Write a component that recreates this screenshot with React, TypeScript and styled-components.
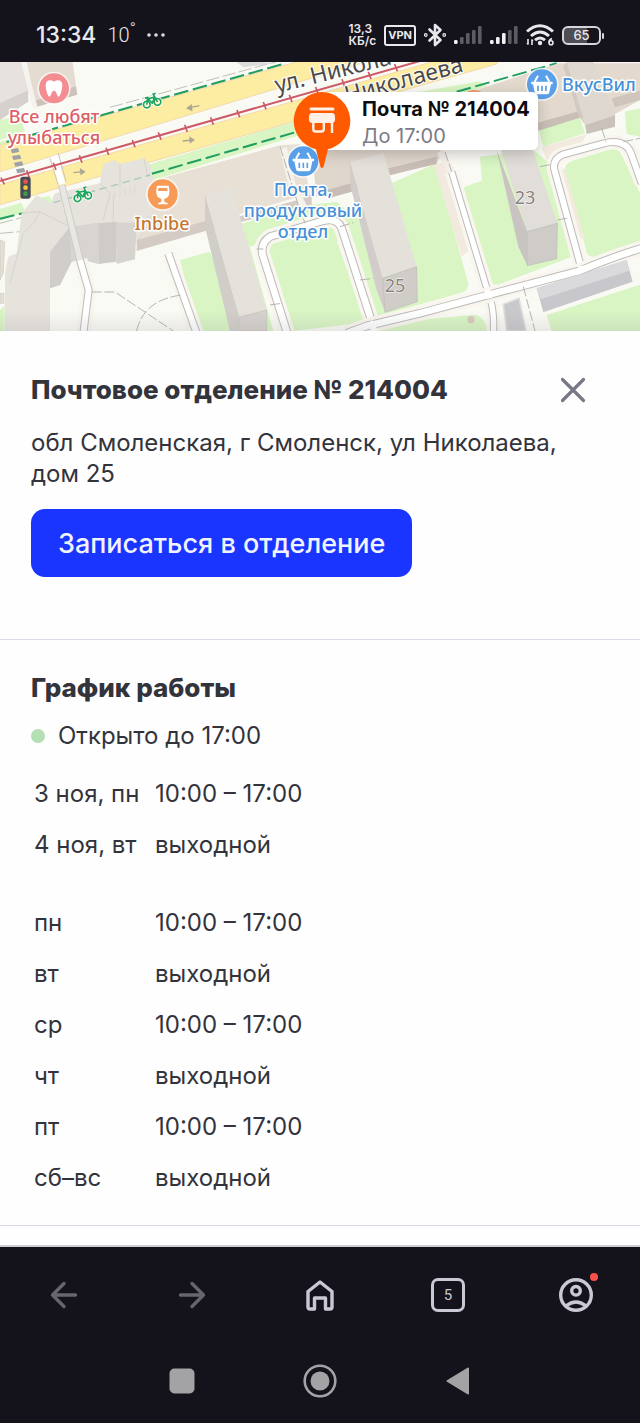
import styled, { createGlobalStyle } from 'styled-components';

const DATES = [
  { day: '3 ноя, пн', hours: '10:00 – 17:00' },
  { day: '4 ноя, вт', hours: 'выходной' },
];

const WEEK = [
  { day: 'пн', hours: '10:00 – 17:00' },
  { day: 'вт', hours: 'выходной' },
  { day: 'ср', hours: '10:00 – 17:00' },
  { day: 'чт', hours: 'выходной' },
  { day: 'пт', hours: '10:00 – 17:00' },
  { day: 'сб–вс', hours: 'выходной' },
];

const StatusIcons = () => (
  <StatusRight>
    <Speed>
      <span>13,3</span>
      <span>КБ/с</span>
    </Speed>
    <Vpn>VPN</Vpn>
    <svg width="22" height="24" viewBox="0 0 22 24" fill="none" stroke="#e9e8ec" strokeWidth="2.6" strokeLinejoin="round" strokeLinecap="round">
      <path d="M5.5 6.5 16.5 17 11 22V2l5.5 5L5.5 17.5" />
      <circle cx="1.8" cy="12" r="0.6" />
      <circle cx="20.2" cy="12" r="0.6" />
    </svg>
    <Signal level={1} />
    <Signal level={3} />
    <svg width="28" height="22" viewBox="0 0 28 22" fill="none" stroke="#e9e8ec" strokeWidth="3">
      <path d="M1 7.5Q14-4 27 7.5M5 12q9-8 18 0M9 16.200q5-4.500 10 0" />
      <circle cx="14" cy="19" r="2.200" fill="#e9e8ec" stroke="none" />
      <path d="M2 15v5m-1-1 1.500 1.500M6 21v-5m1 1-1.500-1.500" strokeWidth="1.600" />
      <path d="M26 14.500q-3 1-3 4" strokeWidth="1.600" />
      <circle cx="25" cy="18.800" r="2" strokeWidth="1.600" />
    </svg>
    <Battery>
      <span>65</span>
    </Battery>
  </StatusRight>
);

const Signal = ({ level }: { level: number }) => (
  <svg width="28" height="18" viewBox="0 0 28 18">
    {[4, 7, 11, 14, 18].map((h, i) => (
      <rect key={i} x={i * 6} y={18 - h} width="3.600" height={h} rx="1.200" fill={i < level ? '#f1f0f3' : '#5d5c62'} />
    ))}
  </svg>
);

const Bike = ({ x, y }: { x: number; y: number }) => (
  <g transform={`translate(${x} ${y}) rotate(-14)`} fill="none" stroke="#fff" strokeLinejoin="round">
    {['#ffffff', '#1fa55c'].map((color) => (
      <g key={color} stroke={color} strokeWidth={color === '#ffffff' ? 10 : 5}>
        <circle cx="-16" cy="8" r="10" />
        <circle cx="17" cy="8" r="10" />
        <path d="M-16 8-8-12H-16M-8-8 1 8 12-8H-8M17 8 10-18H18" />
      </g>
    ))}
  </g>
);

const Basket = ({ x, y }: { x: number; y: number }) => (
  <g transform={`translate(${x} ${y})`}>
    <circle r="50" fill="#fff" opacity="0.7" />
    <circle r="45" fill="#5aa0e8" />
    <path d="M-32-8h64v8h-5l-5 24q-1 6-7 6h-30q-6 0-7-6l-5-24h-5z" fill="#fff" />
    <path d="m-22-8 10-18M22-8 12-26" stroke="#fff" strokeWidth="6" />
    <path d="M-12 4v16M0 4v16M12 4v16" stroke="#5aa0e8" strokeWidth="5" />
  </g>
);

const Street = ({ d, width = 18 }: { d: string; width?: number }) => (
  <g fill="none" strokeLinejoin="round">
    <path d={d} stroke="#f9f6ef" strokeWidth={width + 26} />
    <path d={d} stroke="#bdbbb9" strokeWidth={width + 6} />
    <path d={d} stroke="#fff" strokeWidth={width} />
  </g>
);

const MapPicture = () => (
  <MapSvg viewBox="0 0 640 269" preserveAspectRatio="xMidYMid slice" aria-hidden="true">
    <defs>
      <linearGradient id="fade" x1="0" x2="0" y1="0" y2="1">
        <stop offset="0" stopColor="#8b8791" stopOpacity="0" />
        <stop offset="1" stopColor="#8b8791" stopOpacity="0.16" />
      </linearGradient>
    </defs>
    <rect width="640" height="269" fill="#fafaf4" />
    <g transform="scale(0.33333) translate(0 -6)">
      {/* lawns */}
      <g fill="#d8f5c3">
        <path d="M0 180 60 165 75 215 0 240zM0 447 65 428 75 455 0 482zM110 415 150 408 155 430 130 440z" />
        <path d="M430 318 880 186 900 225 460 360zM1260 95 1440 64 1460 78 1300 130z" />
        <path d="M540 600 630 575 720 813 592 813zM0 750 14 735V813H0z" />
        <path d="M0 245 90 222 0 260z" />
        <path d="M700 500 880 440 1010 425 1050 460 1080 545 800 540 750 560 820 813 700 813z" />
        <path d="M805 575Q805 550 830 542L960 498Q990 490 1000 515L1090 765Q1094 785 1075 790L880 813z" />
        <path d="M1040 470 1070 460 1160 760 1125 770zM1150 380 1305 312 1405 670Q1405 695 1380 700L1145 765 1110 690z" />
        <path d="M1390 382 1446 362 1440 290 1600 270 1650 310 1715 590 1500 672Q1475 680 1468 655z" />
        <path d="M1615 205 1740 175 1755 220 1630 260zM1875 155 1920 145V230L1880 222z" />
        <path d="M1695 330Q1695 310 1715 303L1830 268Q1855 262 1865 285L1920 400V562L1790 590Q1762 594 1758 570z" />
        <path d="M1640 765 1900 680 1920 675V813H1655zM1140 790 1420 765Q1450 763 1465 813H1130z" />
      </g>
      <g fill="#f2eadf">
        <path d="M1300 312 1345 305 1410 570 1385 590zM1625 262 1760 222 1740 260 1640 300zM1680 330 1695 325 1755 540 1730 530z" />
        <path d="M700 500 680 540 650 430 740 400z" />
      </g>

      {/* avenue */}
      <path d="M0 255 1000-25H1200L0 335z" fill="#fdeda2" stroke="#f3d9ae" strokeWidth="3" />
      <path d="M0 374 1330 -4H1500L1490 12 0 434z" fill="#fdeda2" stroke="#f3d9ae" strokeWidth="3" />
      <path d="M150 295 175 375M175 280 198 365" stroke="#c8c5bd" strokeWidth="3" />
      <path d="M162 288 186 372" stroke="#fff" strokeWidth="20" />
      <g fill="none" stroke="#bfbfbd" strokeWidth="3" strokeDasharray="40 10">
        <path d="M330 142 920-20M0 490 460 365 660 315 900 255M0 520 60 515" />
      </g>
      <g fill="none" stroke="#cd5a66" strokeWidth="6">
        <path d="M0 363 1260 3" />
        <path d="m3 353 10 20M80 331l8 22M160 308l8 22M238 286l8 22M318 263l8 22M397 240l8 22M475 217l8 22M554 194l8 22M632 172l8 22M711 150l8 22M790 126l8 22M868 104l8 22M947 81l8 22M1026 58l8 22M1105 35l8 22M1184 12l8 22" strokeWidth="5" />
      </g>
      <g fill="none" stroke="#1f9e60" strokeWidth="6" strokeDasharray="44 14">
        <path d="M20 246 850 12M0 476 80 457M450 343 885 217M1370 95 1670 10" />
      </g>
      <g fill="#9da2a8">
        <path d="m32 268 22-4 4 12-22 4zM36 288l24-4 4 12-24 4zM42 308l24-4 4 12-24 4zM48 328l24-4 4 12-24 4z" />
      </g>

      {/* buildings */}
      <path d="M0 6H65L85 90 0 128z" fill="#e7e2dd" />
      <path d="M0 128 85 90V125L0 180z" fill="#d6d1cc" />
      <path d="M80 6H218L228 78 104 122z" fill="#e4dcd1" />
      <path d="M104 122 228 78 232 104 112 140z" fill="#cdc3ba" />
      <path d="M70 6 92 90 106 145" fill="none" stroke="#f5f3ee" strokeWidth="14" />

      <path d="M458 362 840 256 900 252 930 400 660 480 410 545 450 470z" fill="#e8e0d5" />
      <path d="M410 540 620 482 680 480 900 418 935 400V435L660 500 410 573z" fill="#d4cbc4" />
      <path d="M65 460 110 405 150 430 165 400 300 370 310 312 345 300 360 312 432 295 450 315 460 360 450 470 410 545 215 605 180 675 150 685V813H15V640L25 590 50 580z" fill="#e6e3dd" />
      <path d="M150 575 210 500 215 605 180 675 150 685z" fill="#d0cdca" />
      <path d="M210 500 295 488V612L250 600 215 605z" fill="#d8d5d1" />
      <path d="M295 490 350 485V605L295 612z" fill="#cfccc8" />
      <path d="M350 488H410L405 598 350 612z" fill="#d7d4d0" />
      <path d="M0 540 14 545 10 640 0 660zM0 700H12V730H0z" fill="#e5ded2" stroke="#d0ccc5" strokeWidth="2" />
      <g fill="none" stroke="#cfccc7" strokeWidth="2">
        <path d="M120 455 100 490 70 520 30 670M65 460 120 455 210 500M300 370 330 400 310 480M340 405V485M360 312V380M432 295 442 345M410 490 450 470M410 545 440 500" />
      </g>
      <g fill="none" stroke="#dedbd6" strokeWidth="4">
        <path d="M330 395v25M345 392v25M360 388v25M375 384v25M390 380v25M405 376v25" />
        <path d="M160 428 450 345" stroke="#a9c9b1" strokeDasharray="22 14" />
      </g>

      <path d="M935 275 1260 240 1330 275 1310 310 1260 320 950 410z" fill="#dfd6cc" />
      <path d="M980 390 1070 365 1075 390 985 415zM1170 345 1310 312V290L1165 325z" fill="#c8beb7" />
      <path d="M1320 125 1675 10H1920V120L1840 165 1620 185 1560 230H1340z" fill="#e3d9cd" />
      <path d="M1612 188 1750 150V170L1615 212z" fill="#c9bfb7" />
      <path d="M1835 115 1920 92V120L1845 142z" fill="#cfc5bc" />
      <path d="M1700 6H1780L1845 165 1755 195z" fill="#ded8d0" />
      <path d="M1755 195 1845 165V200L1760 222z" fill="#c9c1ba" />
      <path d="M1700 6 1755 195 1735 165 1690 20z" fill="#d2cac2" />

      <path d="M710 6H780L830 10 730 22z" fill="#dcdcda" />
      <path d="M615 405 695 382 800 750 718 772z" fill="#e5e1db" />
      <path d="M615 405 718 772 712 813H690L615 500z" fill="#d1ceca" />
      <path d="M718 772 800 750V813H714z" fill="#d5d1cd" stroke="#c2bebb" strokeWidth="2" />
      <path d="M1050 305 1150 280 1250 620 1148 655z" fill="#e4e1db" />
      <path d="M1050 305 1148 655 1155 755 1130 690 1052 380z" fill="#d2cdca" />
      <path d="M1148 655 1250 620 1252 725 1155 757z" fill="#d0ccc8" stroke="#bdbab6" strokeWidth="2" />
      <path d="M1496 250 1595 260 1672 490 1582 515z" fill="#e1ddd8" />
      <path d="M1490 270 1582 515V617L1555 560z" fill="#c9c4c2" />
      <path d="M1582 515 1672 490 1670 596 1582 617z" fill="#cfccc8" stroke="#bdbab6" strokeWidth="2" />

      {/* streets */}
      <g fill="none" strokeLinejoin="round">
        <path d="M185 375 240 600" stroke="#cfcbc6" strokeWidth="22" />
        <path d="M185 375 240 600" stroke="#e9e7e3" strokeWidth="16" />
      </g>
      <Street d="M240 600 266 690 250 820" />
      <Street d="M505 580 590 820" />
      <Street d="M862 820 788 585Q780 550 810 530L970 482Q1012 472 1025 505L1120 800" width={20} />
      <Street d="M1355 335 1465 700Q1485 750 1480 820" width={16} />
      <Street d="M1745 628 1662 325Q1660 295 1690 283L1820 248Q1880 238 1895 285L1925 370" />
      <Street d="M1040 820 1100 798 1260 760 1460 706 1740 632Q1840 590 1925 565" width={20} />
      <path d="M1110 785 1125 815M1462 690 1468 715M1742 618 1745 635" stroke="#fff" strokeWidth="18" />
      <path d="M1320 275 1355 335" stroke="#f4efe8" strokeWidth="20" />
      <path d="M850 265 875 370 910 440" fill="none" stroke="#f5f2ec" strokeWidth="22" />
      <g fill="none" stroke="#b5b4b2" strokeWidth="3" strokeDasharray="30 8">
        <path d="M275 696H345L520 813M410 813Q430 720 545 705M840 260 890 420 915 490M1335 275 1355 335M1620 320 1655 313M1672 480 1700 475M770 567H790M810 735 845 730M1080 660 1120 655M1020 500 1060 488M1570 680 1605 813M1805 205 1818 245M1870 245 1920 235" />
      </g>
      <path d="M1610 685 1880 600 1898 665 1630 757z" fill="#c8c8cc" />
      <path d="M1610 685 1880 600 1888 632 1622 718z" fill="#dad9db" />
      <path d="M1510 733 1557 715 1578 813H1520z" fill="#c9c8cb" stroke="#dedddd" strokeWidth="5" />
      <circle cx="1413" cy="779" r="11" fill="#d9c9bf" />

      {/* lane arrows */}
      <g fill="none" stroke="#aaa595" strokeWidth="4">
        <path d="M598 137 570 143M220 338l30-3M548 243l30-3" />
        <path d="m575 133-16 12 18 8zM240 325l16 10-14 10zM568 230l16 10-14 10z" fill="#aaa595" strokeWidth="1" />
      </g>
      <Bike x={454} y={122} />
      <Bike x={246} y={403} />

      {/* places */}
      <circle cx="162" cy="85" r="50" fill="#fff" opacity="0.7" />
      <circle cx="162" cy="85" r="45" fill="#f38d92" />
      <path d="M162 65c12-8 25-4 25 11 0 12-6 34-11 34-6 0-5-18-14-18s-8 18-14 18c-5 0-11-22-11-34 0-15 13-19 25-11z" fill="#fff" />
      <circle cx="488" cy="403" r="50" fill="#fff" opacity="0.7" />
      <circle cx="488" cy="403" r="45" fill="#f79a55" />
      <path d="M471 377h35q8 36-13 39v10l10 3v4h-29v-4l10-3v-10q-21-3-13-39z" fill="#fff" />
      <path d="M475 384h27l1 9h-29z" fill="#f79a55" />
      <circle cx="1422" cy="132" r="42" fill="#ee9a70" />
      <Basket x={910} y={304} />
      <Basket x={1626} y={73} />
      <rect x="61" y="350" width="31" height="66" rx="8" fill="#464b57" />
      <circle cx="76.500" cy="365" r="7" fill="#e8554f" />
      <circle cx="76.500" cy="383" r="7" fill="#f2c834" />
      <circle cx="76.500" cy="401" r="7" fill="#3f9f46" />
    </g>

    <g textAnchor="middle">
      <Place x="54" y="61" fill="#dc5f68">Все любят</Place>
      <Place x="54" y="82" fill="#dc5f68">улыбаться</Place>
      <Place x="162" y="168" fill="#c7762f">Inbibe</Place>
      <Place x="303" y="134" fill="#4690d8">Почта,</Place>
      <Place x="303" y="155" fill="#4690d8">продуктовый</Place>
      <Place x="303" y="176" fill="#4690d8">отдел</Place>
      <House x="525" y="142">23</House>
      <House x="395" y="230">25</House>
    </g>
    <Place x="562" y="29" fill="#4690d8">ВкусВил</Place>
    <g transform="translate(277 31) rotate(-14)">
      <StreetName>ул. Никола</StreetName>
    </g>
    <g transform="translate(347 41) rotate(-15)">
      <StreetName>Николаева</StreetName>
    </g>
    <rect y="249" width="640" height="20" fill="url(#fade)" />
  </MapSvg>
);

const App = () => {
  const renderHours = (rows: typeof WEEK, label: string) => (
    <Hours aria-label={label}>
      <tbody>
        {rows.map(({ day, hours }) => (
          <tr key={day}>
            <DayCell scope="row">{day}</DayCell>
            <td>{hours}</td>
          </tr>
        ))}
      </tbody>
    </Hours>
  );

  return (
    <Page>
      <GlobalStyle />
      <StatusBar>
        <StatusLeft>
          <Clock>13:34</Clock>
          <Degrees>
            10<sup>°</sup>
          </Degrees>
          <svg width="18" height="4" viewBox="0 0 18 4" fill="#dddce1">
            <circle cx="2" cy="2" r="1.800" />
            <circle cx="9" cy="2" r="1.800" />
            <circle cx="16" cy="2" r="1.800" />
          </svg>
        </StatusLeft>
        <StatusIcons />
      </StatusBar>

      <MapArea>
        <MapPicture />
        <Balloon>
          <BalloonTitle>Почта № 214004</BalloonTitle>
          <BalloonText>До 17:00</BalloonText>
        </Balloon>
        <Pin viewBox="0 0 60 78" width="60" height="78">
          <path d="M30 1a29 29 0 0 1 6 57.200L31.500 76q-1.500 2-3 0L24 58.200A29 29 0 0 1 30 1z" fill="#ff5a00" />
          <path d="M19 18h22" stroke="#fff0e8" strokeWidth="3" strokeLinecap="round" />
          <path d="M20 22h20q3 0 3 4v3q0 3-4 3H21q-4 0-4-3v-3q0-4 3-4z" fill="#fff0e8" />
          <path d="M21.300 30v8q0 2.500 2 2.500h6q2.500 0 2.500-2.500v-8M40 30v12" fill="none" stroke="#fff0e8" strokeWidth="2.400" />
        </Pin>
      </MapArea>

      <Office>
        <OfficeTop>
          <Title>Почтовое отделение № 214004</Title>
          <CloseButton type="button" aria-label="Закрыть">
            <svg width="26" height="26" viewBox="0 0 26 26" stroke="#777885" strokeWidth="3.200" strokeLinecap="round">
              <path d="m2.500 2.500 21 21M23.500 2.500l-21 21" />
            </svg>
          </CloseButton>
        </OfficeTop>
        <Address>обл Смоленская, г Смоленск, ул Николаева, дом 25</Address>
        <BookButton type="button">Записаться в отделение</BookButton>
      </Office>

      <Schedule>
        <Title>График работы</Title>
        <OpenState>Открыто до 17:00</OpenState>
        <HoursGroup>
          {renderHours(DATES, 'Ближайшие дни')}
          {renderHours(WEEK, 'Неделя')}
        </HoursGroup>
      </Schedule>

      <Rest />

      <BottomBars>
        <BrowserBar aria-label="Браузер">
          <BarButton type="button" aria-label="Назад">
            <svg width="28" height="28" viewBox="0 0 28 28" fill="none" stroke="#67656e" strokeWidth="3.400" strokeLinecap="round" strokeLinejoin="round">
              <path d="M14 2.500 2.500 14 14 25.500M3 14H25.500" />
            </svg>
          </BarButton>
          <BarButton type="button" aria-label="Вперёд">
            <svg width="28" height="28" viewBox="0 0 28 28" fill="none" stroke="#67656e" strokeWidth="3.400" strokeLinecap="round" strokeLinejoin="round">
              <path d="M14 2.500 25.500 14 14 25.500M25 14H2.500" />
            </svg>
          </BarButton>
          <BarButton type="button" aria-label="Домой">
            <svg width="30" height="32" viewBox="0 0 30 32" fill="none" stroke="#c9c9d6" strokeWidth="3.400" strokeLinejoin="round">
              <path d="M3 12.500 15 3l12 9.500V28q0 2-2 2h-4.500V19h-11v11H5q-2 0-2-2z" />
            </svg>
          </BarButton>
          <BarButton type="button" aria-label="Вкладки">
            <Tabs>5</Tabs>
          </BarButton>
          <BarButton type="button" aria-label="Профиль">
            <svg width="36" height="36" viewBox="0 0 36 36" fill="none" stroke="#c9c9d6" strokeWidth="3.400">
              <circle cx="18" cy="18" r="15.300" />
              <circle cx="18" cy="13.800" r="4.300" />
              <path d="M8 29q10-8 20 0" />
            </svg>
            <Dot />
          </BarButton>
        </BrowserBar>
        <SystemBar aria-label="Система">
          <BarButton type="button" aria-label="Недавние">
            <svg width="26" height="26" viewBox="0 0 26 26">
              <rect x="0.500" y="0.500" width="25" height="25" rx="5" fill="#a3a2a4" />
            </svg>
          </BarButton>
          <BarButton type="button" aria-label="Главный экран">
            <svg width="34" height="34" viewBox="0 0 34 34" fill="#a3a2a4">
              <circle cx="17" cy="17" r="15.300" fill="none" stroke="#a3a2a4" strokeWidth="2.600" />
              <circle cx="17" cy="17" r="9.500" />
            </svg>
          </BarButton>
          <BarButton type="button" aria-label="Назад">
            <svg width="24" height="28" viewBox="0 0 24 28" fill="#a3a2a4" stroke="#a3a2a4" strokeWidth="2" strokeLinejoin="round">
              <path d="M22 1.500V26.500L1.500 14z" />
            </svg>
          </BarButton>
        </SystemBar>
      </BottomBars>
    </Page>
  );
};

const GlobalStyle = createGlobalStyle`
  * {
    box-sizing: border-box;
  }
  body {
    margin: 0;
    background: #fefefe;
    font-family: Inter, 'Open Sans', sans-serif;
    color: #33333c;
  }
  button {
    border: none;
    padding: 0;
    background: none;
    font: inherit;
    color: inherit;
    cursor: pointer;
  }
  svg {
    display: block;
  }
`;

const Page = styled.div`
  display: flex;
  flex-direction: column;
  min-height: 100vh;
`;

const StatusBar = styled.header`
  display: flex;
  justify-content: space-between;
  align-items: center;
  height: 62px;
  padding: 8px 39px 0 36px;
  background: #14131b;
  color: #e9e8ec;
`;

const StatusLeft = styled.div`
  display: flex;
  align-items: center;
  gap: 11px;
`;

const StatusRight = styled.div`
  display: flex;
  align-items: center;
  gap: 8px;
`;

const Clock = styled.span`
  font-size: 23px;
  font-weight: 500;
`;

const Degrees = styled.span`
  font-family: Roboto, sans-serif;
  font-size: 20px;
  font-weight: 300;

  sup {
    font-size: 16px;
    line-height: 0;
  }
`;

const Speed = styled.span`
  display: flex;
  flex-direction: column;
  font-size: 12px;
  line-height: 12px;
  font-weight: 600;
`;

const Vpn = styled.span`
  padding: 0 2px;
  border: 2px solid #e9e8ec;
  border-radius: 3px;
  font-size: 11px;
  line-height: 17px;
  font-weight: 700;
`;

const Battery = styled.span`
  position: relative;
  width: 39px;
  height: 19px;
  border: 2px solid #d6d5da;
  border-radius: 6px;
  background: linear-gradient(90deg, #4f4e55 65%, transparent 65%);
  font-size: 13px;
  line-height: 15px;
  font-weight: 500;
  text-align: center;

  &::after {
    content: '';
    position: absolute;
    top: 5px;
    right: -5px;
    width: 2px;
    height: 6px;
    border-radius: 1px;
    background: #d6d5da;
  }
`;

const MapArea = styled.section`
  position: relative;
  height: 269px;
  overflow: hidden;
`;

const MapSvg = styled.svg`
  width: 100%;
  height: 100%;
`;

const Place = styled.text`
  font-family: 'Noto Sans', sans-serif;
  font-size: 18px;
  font-weight: 500;
  stroke: #fff;
  stroke-width: 3px;
  stroke-linejoin: round;
  paint-order: stroke;
`;

const House = styled(Place)`
  fill: #85817d;
  font-weight: 400;
  stroke-width: 1px;
`;

const StreetName = styled.text`
  font-family: 'Noto Sans', sans-serif;
  font-size: 23px;
  fill: #4c4a4a;
  stroke: #fff;
  stroke-width: 2px;
  paint-order: stroke;
`;

const Balloon = styled.div`
  position: absolute;
  top: 30px;
  left: 50%;
  width: 218px;
  padding: 4px 0 0 42px;
  border-radius: 6px;
  background: #fff;
  box-shadow: 0 4px 14px rgba(60, 50, 60, 0.25);
  white-space: nowrap;
`;

const BalloonTitle = styled.div`
  font-size: 20px;
  line-height: 26px;
  font-weight: 700;
  color: #0c0b10;
`;

const BalloonText = styled.div`
  font-size: 20px;
  line-height: 28px;
  color: #7b7a86;
`;

const Pin = styled.svg`
  position: absolute;
  top: 29px;
  left: calc(50% - 28px);
`;

const Office = styled.section`
  padding: 42px 31px 62px;
  border-bottom: 1px solid #dcdce8;
`;

const OfficeTop = styled.div`
  display: flex;
  justify-content: space-between;
  align-items: center;
  padding-right: 23px;
`;

const Title = styled.h2`
  margin: 0;
  font-size: 26px;
  line-height: 34px;
  font-weight: 800;
`;

const CloseButton = styled.button`
  display: flex;
`;

const Address = styled.p`
  margin: 20px 0;
  font-size: 24px;
  line-height: 31px;
`;

const BookButton = styled.button`
  height: 68px;
  padding: 0 27px;
  border-radius: 14px;
  background: #1a35ff;
  color: #f1f3ff;
  font-size: 27px;
  font-weight: 500;
`;

const Schedule = styled.section`
  padding: 31px 31px 22px;
  border-bottom: 1px solid #dcdce8;
`;

const OpenState = styled.p`
  display: flex;
  align-items: center;
  gap: 13px;
  margin: 15px 0 17px;
  font-size: 24px;
  line-height: 31px;

  &::before {
    content: '';
    width: 14px;
    height: 14px;
    border-radius: 50%;
    background: #b4dfb3;
  }
`;

const HoursGroup = styled.div`
  display: flex;
  flex-direction: column;
  gap: 27px;
`;

const Hours = styled.table`
  border-collapse: collapse;
  font-size: 24px;
  line-height: 31px;

  th,
  td {
    height: 51px;
    padding: 0 3px;
  }
`;

const DayCell = styled.th`
  width: 121px;
  font-weight: 400;
  text-align: left;
  white-space: nowrap;
`;

const Rest = styled.div`
  flex: 1;
  min-height: 18px;
`;

const BottomBars = styled.footer`
  border-top: 2px solid #cfcfd1;
  background: #14131b;
`;

const BrowserBar = styled.nav`
  display: grid;
  grid-template-columns: repeat(5, 1fr);
  height: 96px;
`;

const SystemBar = styled.nav`
  display: grid;
  grid-template-columns: repeat(3, 138px);
  justify-content: center;
  height: 80px;
  padding-bottom: 4px;
`;

const BarButton = styled.button`
  position: relative;
  display: flex;
  justify-content: center;
  align-items: center;
`;

const Tabs = styled.span`
  width: 34px;
  height: 34px;
  border: 3px solid #c9c9d6;
  border-radius: 7px;
  color: #c9c9d6;
  font-family: Roboto, sans-serif;
  font-size: 15px;
  line-height: 28px;
`;

const Dot = styled.span`
  position: absolute;
  top: 26px;
  left: calc(50% + 14px);
  width: 8px;
  height: 8px;
  border-radius: 50%;
  background: #fb4f4b;
`;

export default App;
